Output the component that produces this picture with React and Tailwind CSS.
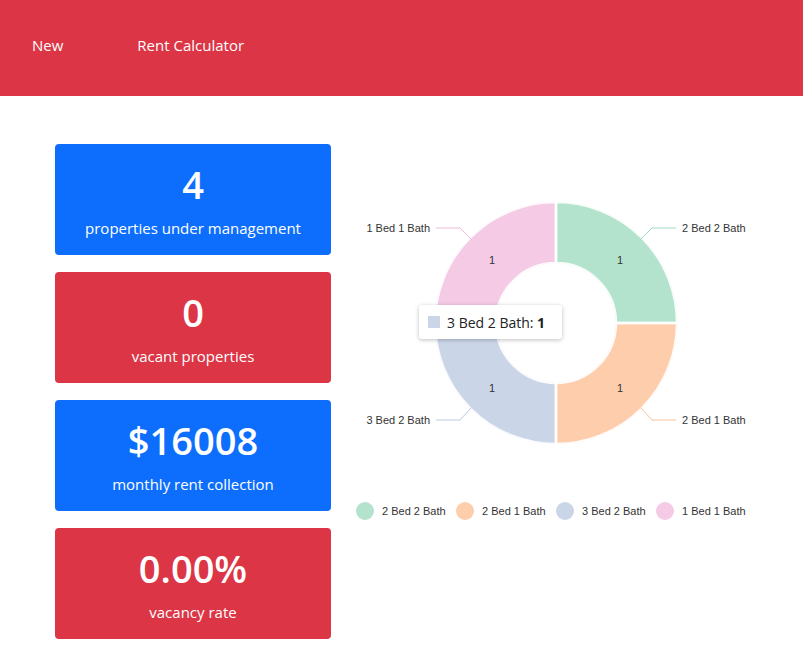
import React from 'react'

const segments = [
  { label: '2 Bed 2 Bath', color: '#b3e2cd', line: '#a3d8c0', start: 0, end: 90 },
  { label: '2 Bed 1 Bath', color: '#fdcdac', line: '#f6c3a0', start: 90, end: 180 },
  { label: '3 Bed 2 Bath', color: '#cbd5e8', line: '#bcc8df', start: 180, end: 270 },
  { label: '1 Bed 1 Bath', color: '#f4cae4', line: '#ecbcd9', start: 270, end: 360 },
]

const stats = [
  { value: '4', label: 'properties under management', bg: 'bg-[#0d6efd]' },
  { value: '0', label: 'vacant properties', bg: 'bg-[#dc3545]' },
  { value: '$16008', label: 'monthly rent collection', bg: 'bg-[#0d6efd]' },
  { value: '0.00%', label: 'vacancy rate', bg: 'bg-[#dc3545]' },
]

const CX = 206
const CY = 179
const R = 121
const r = 60

const pt = (rad, deg) => {
  const a = (deg * Math.PI) / 180
  return [CX + rad * Math.sin(a), CY - rad * Math.cos(a)]
}

function segmentPath(a0, a1) {
  const [x0, y0] = pt(R, a0)
  const [x1, y1] = pt(R, a1)
  const [x2, y2] = pt(r, a1)
  const [x3, y3] = pt(r, a0)
  return `M${x0} ${y0} A${R} ${R} 0 0 1 ${x1} ${y1} L${x2} ${y2} A${r} ${r} 0 0 0 ${x3} ${y3} Z`
}

function DonutChart() {
  return (
    <div className="relative w-[420px] h-[390px]">
      <svg width="420" height="390" viewBox="0 0 420 390" style={{ fontFamily: '"Liberation Sans", Arial, sans-serif' }}>
        {segments.map(s => (
          <path key={s.label} d={segmentPath(s.start, s.end)} fill={s.color} stroke={s.line} strokeWidth="1" strokeLinejoin="round" />
        ))}
        {segments.map(s => (
          <path key={s.label + '-gap'} d={segmentPath(s.start, s.end)} fill="none" stroke="#ffffff" strokeWidth="2.5" strokeLinejoin="round" strokeOpacity="0.9" />
        ))}

        {/* values */}
        <text x="270" y="120" fontSize="11" fill="#333" textAnchor="middle">1</text>
        <text x="270" y="248" fontSize="11" fill="#333" textAnchor="middle">1</text>
        <text x="142" y="248" fontSize="11" fill="#333" textAnchor="middle">1</text>
        <text x="142" y="120" fontSize="11" fill="#333" textAnchor="middle">1</text>

        {/* leader lines + outer labels */}
        <polyline points="291,95 302,84 326,84" fill="none" stroke="#a3d8c0" strokeWidth="1" />
        <text x="332" y="88" fontSize="11" fill="#333">2 Bed 2 Bath</text>

        <polyline points="291,264 302,276 326,276" fill="none" stroke="#f6c3a0" strokeWidth="1" />
        <text x="332" y="280" fontSize="11" fill="#333">2 Bed 1 Bath</text>

        <polyline points="121,264 110,276 86,276" fill="none" stroke="#bcc8df" strokeWidth="1" />
        <text x="80" y="280" fontSize="11" fill="#333" textAnchor="end">3 Bed 2 Bath</text>

        <polyline points="121,95 110,84 86,84" fill="none" stroke="#ecbcd9" strokeWidth="1" />
        <text x="80" y="88" fontSize="11" fill="#333" textAnchor="end">1 Bed 1 Bath</text>

        {/* legend */}
        {segments.map((s, i) => (
          <g key={s.label}>
            <circle cx={15 + i * 100} cy="367" r="9" fill={s.color} />
            <text x={32 + i * 100} y="371" fontSize="11" fill="#333">{s.label}</text>
          </g>
        ))}
      </svg>

      <div className="absolute left-[69px] top-[161px] w-[143px] h-[34px] flex items-center gap-[7px] pl-[9px] bg-white rounded-[3px] shadow-[0_1px_4px_rgba(0,0,0,0.25)] text-[14px] text-[#222]">
        <span className="w-3 h-3 bg-[#cbd5e8]" />
        <span>3 Bed 2 Bath: <b>1</b></span>
      </div>
    </div>
  )
}

export default function App() {
  return (
    <div className="min-h-screen bg-white" style={{ fontFamily: '"Open Sans", "Noto Sans", sans-serif' }}>
      <header className="h-24 bg-[#dc3545] flex items-center pb-[6px] text-white text-[15px]">
        <a className="ml-8">New</a>
        <a className="ml-[74px]">Rent Calculator</a>
      </header>

      <main className="flex pt-12 pl-[55px]">
        <div className="w-[276px] flex flex-col gap-[17px]">
          {stats.map(s => (
            <div key={s.label} className={`${s.bg} rounded-[4px] text-white text-center pt-4 pb-[15px]`}>
              <div className="text-[38px] leading-[48px] font-semibold mb-2">{s.value}</div>
              <div className="text-[15px] leading-6">{s.label}</div>
            </div>
          ))}
        </div>
        <div className="ml-[19px]">
          <DonutChart />
        </div>
      </main>
    </div>
  )
}
